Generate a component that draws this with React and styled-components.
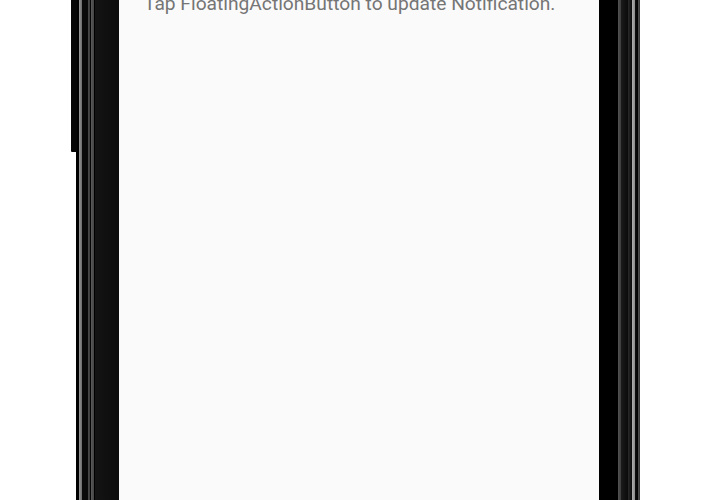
import styled, { createGlobalStyle } from 'styled-components'

const GlobalStyle = createGlobalStyle`
    html, body {
        margin: 0;
        padding: 0;
        background: #ffffff;
        overflow: hidden;
    }
`

const App = () => {
    return <Page>
        <GlobalStyle />
        <Device>
            <SideButton />
            <LeftBezel />
            <Screen>
                <Message>Tap FloatingActionButton to update Notification.</Message>
            </Screen>
            <RightBezel />
        </Device>
    </Page>
}

const Page = styled.div`
    width: 719px;
    height: 500px;
    overflow: hidden;
    background: #ffffff;
    display: flex;
    padding-left: 76px;
    box-sizing: border-box;
`

const Device = styled.div`
    position: relative;
    display: flex;
    width: 564px;
    height: 520px;
    margin-top: -20px;
`

// volume rocker sticking out of the left edge
const SideButton = styled.div`
    position: absolute;
    left: -5px;
    top: 0;
    width: 6px;
    height: 172px;
    background: #050505;
    border-bottom-left-radius: 1px;
`

const LeftBezel = styled.div`
    width: 43px;
    flex-shrink: 0;
    background: linear-gradient(to right,
        #000 0px, #000 3px,
        #9a9a9a 3px, #6a6a6a 6px,
        #0a0a0a 6px, #0a0a0a 12px,
        #4a4a4a 12px, #3a3a3a 14px,
        #050505 14px, #050505 15px,
        #5a5a5a 15px, #444 18px,
        #000 18px, #000 19px,
        #141414 19px, #0c0c0c 43px);
`

const RightBezel = styled.div`
    width: 41px;
    flex-shrink: 0;
    background: linear-gradient(to right,
        #000 0px, #000 19px,
        #555 19px, #3a3a3a 22px,
        #1a1a1a 22px, #0a0a0a 29px,
        #2a2a2a 29px, #0a0a0a 33px,
        #b0b0b0 33px, #8a8a8a 36px,
        #111 36px, #000 39px,
        #555 39px, #333 41px);
`

const Screen = styled.div`
    flex: 1;
    background: #fafafa;
    padding: 13px 0 0 25px;
`

const Message = styled.p`
    margin: 0;
    font-family: Roboto, "Noto Sans", sans-serif;
    font-size: 19.2px;
    line-height: 22px;
    color: #757575;
    white-space: nowrap;
`

export default App
